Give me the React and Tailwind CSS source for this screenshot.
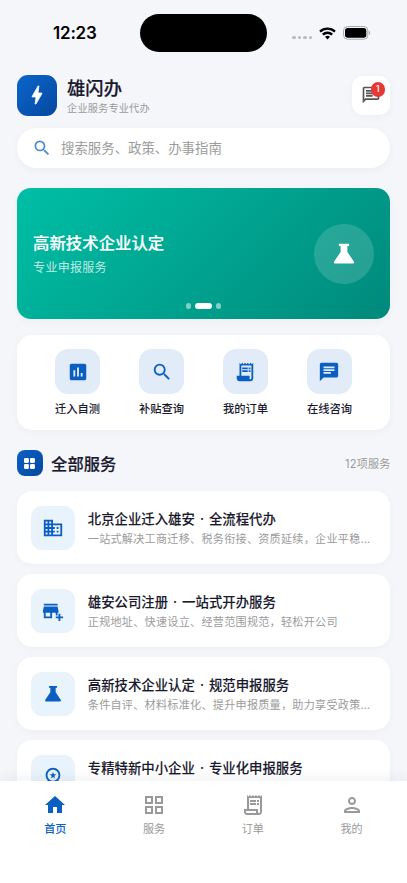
import React, { useState } from "react";
import {
    MdAddBusiness,
    MdAssessment,
    MdBolt,
    MdBusiness,
    MdChat,
    MdHome,
    MdOutlineChat,
    MdOutlineGridView,
    MdOutlinePerson,
    MdOutlineReceiptLong,
    MdOutlineWorkspacePremium,
    MdReceiptLong,
    MdSearch,
} from "react-icons/md";

const FlaskIcon = ({ size = 24, className }) => (
    <svg width={size} height={size} viewBox="0 0 24 24" fill="currentColor" className={className}>
        <path d="M7.6 3.2h8.8v1.9h-1.500v5.100l5.500 8.200c.6.900.2 1.800-.8 1.800H4.400c-1 0-1.400-.9-.8-1.800l5.500-8.200V5.100H7.600z" />
    </svg>
);

const quickActions = [
    { label: "迁入自测", icon: MdAssessment },
    { label: "补贴查询", icon: MdSearch },
    { label: "我的订单", icon: MdReceiptLong },
    { label: "在线咨询", icon: MdChat },
];

const services = [
    {
        title: "北京企业迁入雄安 · 全流程代办",
        desc: "一站式解决工商迁移、税务衔接、资质延续，企业平稳落地雄安",
        icon: MdBusiness,
    },
    {
        title: "雄安公司注册 · 一站式开办服务",
        desc: "正规地址、快速设立、经营范围规范，轻松开公司",
        icon: MdAddBusiness,
    },
    {
        title: "高新技术企业认定 · 规范申报服务",
        desc: "条件自评、材料标准化、提升申报质量，助力享受政策优惠",
        icon: FlaskIcon,
    },
    {
        title: "专精特新中小企业 · 专业化申报服务",
        desc: "梯度培育、材料梳理、专业申报",
        icon: MdOutlineWorkspacePremium,
    },
];

const tabs = [
    { label: "首页", icon: MdHome },
    { label: "服务", icon: MdOutlineGridView },
    { label: "订单", icon: MdOutlineReceiptLong },
    { label: "我的", icon: MdOutlinePerson },
];

const StatusBar = () => (
    <div className="flex h-[66px] items-center">
        <div className="w-[140px] pt-[2px] pl-[53px] font-['Inter'] text-[17px] font-semibold tracking-[-0.2px] text-black">
            12:23
        </div>
        <div className="h-[37.5px] w-[127px] rounded-full bg-black"></div>
        <div className="ml-[25px] flex items-center">
            <div className="mt-[9px] flex gap-[2px]">
                {[0, 1, 2, 3].map((dot) => (
                    <span key={dot} className="h-[3.5px] w-[3.5px] rounded-full bg-[#b9babd]"></span>
                ))}
            </div>
            <svg className="ml-[7px]" width="17" height="13" viewBox="0 0 17 13" fill="none" stroke="#000" strokeWidth="2.3">
                <path d="M1 4.6C5.2.7 11.8.7 16 4.6" />
                <path d="M3.8 7.6C6.4 5.1 10.6 5.1 13.2 7.6" />
                <path d="M6 9.8c1.4-1.3 3.6-1.3 5 0L8.5 12.4z" fill="#000" stroke="none" />
            </svg>
            <svg className="ml-[7px]" width="28" height="14" viewBox="0 0 28 14">
                <rect x=".5" y=".5" width="24.3" height="12.7" rx="4" fill="none" stroke="#a9aaad" />
                <rect x="2" y="2" width="21.3" height="9.7" rx="2.7" fill="#000" />
                <path d="M26 4.8c1.6.6 1.6 3.5 0 4.1z" fill="#a9aaad" />
            </svg>
        </div>
    </div>
);

const Banner = () => (
    <div className="mt-[20.3px] flex h-[131px] flex-col rounded-[14px] bg-[linear-gradient(135deg,#00bfa5,#00897b)] shadow-[0_2px_8px_rgba(0,40,60,0.04)]">
        <div className="flex items-center justify-between pt-[35.4px] pr-[16px] pl-[16.5px]">
            <div className="pt-[2px]">
                <h2 className="text-[16.4px] leading-[24px] font-medium text-white [-webkit-text-stroke:0.2px]">
                    高新技术企业认定
                </h2>
                <p className="mt-[2px] text-[12px] leading-[22px] tracking-[0.3px] text-white/75">专业申报服务</p>
            </div>
            <div className="flex h-[60.5px] w-[60.5px] items-center justify-center rounded-full bg-white/15">
                <FlaskIcon size={28} className="text-white" />
            </div>
        </div>
        <div className="mt-[19px] flex items-center justify-center gap-[4px]">
            <span className="h-[5.6px] w-[5.6px] rounded-full bg-white/50"></span>
            <span className="h-[5.6px] w-[16.5px] rounded-full bg-white"></span>
            <span className="h-[5.6px] w-[5.6px] rounded-full bg-white/50"></span>
        </div>
    </div>
);

const ServiceCard = ({ service }) => {
    const Icon = service.icon;
    return (
        <div className="flex h-[73px] shrink-0 items-center rounded-[15px] bg-white px-[14.5px] shadow-[0_2px_8px_rgba(20,30,60,0.03)]">
            <div className="flex h-[44.4px] w-[44.4px] shrink-0 items-center justify-center rounded-[11px] bg-[#e9f3fc]">
                <Icon size={22} className="text-[#0b5fc0]" />
            </div>
            <div className="ml-[12.3px] min-w-0 flex-1 pt-[2px]">
                <h3 className="truncate text-[13.4px] leading-[20px] font-medium [word-spacing:1.4px] text-[#1a1a2e] [-webkit-text-stroke:0.1px]">
                    {service.title}
                </h3>
                <p className="w-[287px] truncate text-[11.1px] leading-[20px] tracking-[0.27px] text-[#9b9b9b]">
                    {service.desc}
                </p>
            </div>
        </div>
    );
};

const App = () => {
    const [activeTab, setActiveTab] = useState("首页");

    return (
        <div className="flex h-[883px] w-[407px] flex-col overflow-hidden bg-[#f5f6fa] font-['Inter','Noto_Sans_CJK_SC',sans-serif]">
            <StatusBar />

            <main className="flex min-h-0 flex-1 flex-col overflow-hidden px-[16.6px]">
                <header className="mt-[9px] flex h-[40.5px] shrink-0 items-center">
                    <div className="flex h-[40.5px] w-[40.5px] items-center justify-center rounded-[11px] bg-gradient-to-br from-[#0a66cc] to-[#0748a0]">
                        <MdBolt size={24} className="text-white" stroke="currentColor" strokeWidth="0.7" />
                    </div>
                    <div className="ml-[10px] flex-1 pt-[2px]">
                        <h1 className="text-[18.3px] leading-[24px] font-medium text-[#1a1a2e] [-webkit-text-stroke:0.2px]">
                            雄闪办
                        </h1>
                        <p className="text-[10.2px] leading-[17px] tracking-[0.15px] text-[#9b9b9b]">企业服务专业代办</p>
                    </div>
                    <button className="relative flex h-[38.8px] w-[38.8px] items-center justify-center rounded-[11px] bg-white shadow-[0_2px_8px_rgba(20,30,60,0.04)]">
                        <MdOutlineChat size={20} className="text-[#555]" />
                        <span className="absolute top-[6px] right-[5.8px] flex h-[15px] w-[13.5px] items-center justify-center rounded-full bg-[#e53935] text-[8.5px] font-medium text-white">
                            1
                        </span>
                    </button>
                </header>

                <div className="mt-[12.3px] flex h-[40.2px] shrink-0 items-center rounded-full bg-white pl-[15.5px] shadow-[0_2px_8px_rgba(20,30,60,0.04)]">
                    <MdSearch size={20} className="text-[#4b8bc8]" />
                    <span className="ml-[9px] text-[13.4px] leading-[20px] text-[#9b9b9b]">搜索服务、政策、办事指南</span>
                </div>

                <div className="shrink-0">
                    <Banner />
                </div>

                <div className="mt-[16px] flex h-[95px] shrink-0 justify-center gap-[39.4px] rounded-[15px] bg-white pt-[14px] shadow-[0_2px_10px_rgba(20,30,60,0.04)]">
                    {quickActions.map(({ label, icon: Icon }) => (
                        <div key={label} className="flex w-[44.6px] flex-col items-center">
                            <div className="flex h-[44.6px] w-[44.6px] items-center justify-center rounded-[13px] bg-[#e1ecf8]">
                                <Icon size={22} className="text-[#0b5fc0]" />
                            </div>
                            <span className="mt-[7px] text-[11.3px] leading-[17px] font-medium whitespace-nowrap text-[#1a1a2e]">
                                {label}
                            </span>
                        </div>
                    ))}
                </div>

                <div className="mt-[19.7px] flex h-[26.5px] shrink-0 items-center">
                    <div className="flex h-[26.5px] w-[26.5px] items-center justify-center rounded-[8px] bg-gradient-to-br from-[#0a60c4] to-[#0748a0]">
                        <svg width="11" height="11" viewBox="0 0 11 11" fill="#fff">
                            <rect width="4.9" height="4.9" rx="1.2" />
                            <rect x="6" width="4.9" height="4.9" rx="1.2" />
                            <rect y="6" width="4.9" height="4.9" rx="1.2" />
                            <rect x="6" y="6" width="4.9" height="4.9" rx="1.2" />
                        </svg>
                    </div>
                    <h2 className="ml-[8px] flex-1 pt-[1.5px] text-[16.3px] font-medium text-[#1a1a2e] [-webkit-text-stroke:0.2px]">
                        全部服务
                    </h2>
                    <span className="pt-[1.5px] text-[11.1px] tracking-[0.15px] text-[#9b9b9b]">12项服务</span>
                </div>

                <div className="mt-[15px] flex flex-col gap-[10px]">
                    {services.map((service) => (
                        <ServiceCard key={service.title} service={service} />
                    ))}
                </div>
            </main>

            <nav className="z-10 flex h-[102.3px] shrink-0 bg-white px-[6px] pt-[12px] shadow-[0_-3px_12px_rgba(20,30,60,0.06)]">
                {tabs.map(({ label, icon: Icon }) => (
                    <button
                        key={label}
                        onClick={() => setActiveTab(label)}
                        className={`flex flex-1 flex-col items-center ${
                            activeTab === label ? "font-medium text-[#0b5fc0]" : "text-[#999]"
                        }`}
                    >
                        <Icon size={24} />
                        <span className="mt-[4px] text-[11.1px] leading-[17px]">{label}</span>
                    </button>
                ))}
            </nav>
        </div>
    );
};

export default App;
